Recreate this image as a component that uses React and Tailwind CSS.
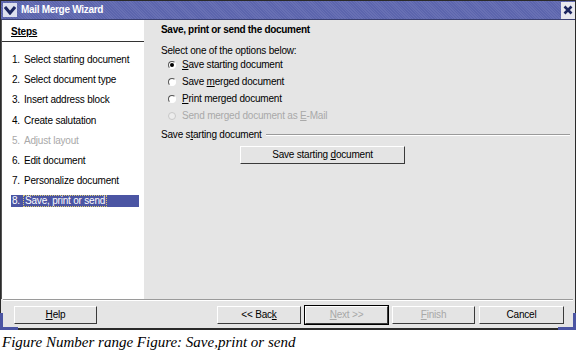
import React from "react";

const steps = [
    { n: "1.", label: "Select starting document" },
    { n: "2.", label: "Select document type" },
    { n: "3.", label: "Insert address block" },
    { n: "4.", label: "Create salutation" },
    { n: "5.", label: "Adjust layout", disabled: true },
    { n: "6.", label: "Edit document" },
    { n: "7.", label: "Personalize document" },
    { n: "8.", label: "Save, print or send", active: true },
];

const options = [
    { label: "Save starting document", key: "S", checked: true },
    { label: "Save merged document", key: "m" },
    { label: "Print merged document", key: "P" },
    { label: "Send merged document as E-Mail", key: "E", disabled: true },
];

// underline the mnemonic letter the way the toolkit does
const Mnemonic = ({ text, char }) => {
    const i = text.indexOf(char);
    if (i < 0) return <span>{text}</span>;
    return (
        <span className="whitespace-pre">
            {text.slice(0, i)}
            <span className="underline underline-offset-1">{text[i]}</span>
            {text.slice(i + 1)}
        </span>
    );
};

const Button = ({ children, className = "", disabled, isDefault }) => (
    <div
        className={`h-[18px] flex items-center justify-center bg-[#e4e4e4] border border-t-white border-l-white border-b-[#3a3a3a] border-r-[#3a3a3a] ${
            isDefault ? "outline outline-1 outline-black" : ""
        } ${disabled ? "text-[#a8a8a8]" : "text-black"} ${className}`}
    >
        {children}
    </div>
);

const Radio = ({ checked, disabled }) => (
    <div
        className={`w-[8px] h-[8px] rounded-full border flex items-center justify-center ${
            disabled
                ? "border-[#c8c8c8] bg-[#ececec]"
                : "border-t-[#555] border-l-[#555] border-b-white border-r-white bg-white"
        }`}
    >
        {checked && <div className="w-[4px] h-[4px] rounded-full bg-black" />}
    </div>
);

export default function App() {
    return (
        <div className="w-[577px] h-[353px] bg-white font-['Liberation_Sans',sans-serif] text-[10px] tracking-[-0.2px] leading-none overflow-hidden">
            <div className="relative w-[576px] h-[330px] border border-[#2a2a2a] border-b-2 flex flex-col bg-[#e5e5e5]">
                {/* title bar */}
                <div className="h-[19px] flex items-center bg-[#5c65ad] bg-[repeating-linear-gradient(45deg,#5c65ad_0px,#5c65ad_1px,#6870b4_1px,#6870b4_2px)] border-b border-[#3a3f70]">
                    <div className="w-[14px] h-[14px] ml-[2px] bg-[#dde0ee] flex items-center justify-center">
                        <svg width="12" height="9" viewBox="0 0 12 9">
                            <path d="M1 1 L6 7 L11 1" stroke="#1c2660" strokeWidth="3" fill="none" />
                        </svg>
                    </div>
                    <span className="ml-[4px] text-white font-bold text-[10px] tracking-[-0.3px]">
                        Mail Merge Wizard
                    </span>
                    <div className="ml-auto w-[14px] h-[17px] bg-[#e8e8ee] flex items-center justify-center">
                        <svg width="10" height="10" viewBox="0 0 10 10">
                            <path d="M1.5 1.5 L8.5 8.5 M8.5 1.5 L1.5 8.5" stroke="#1c2660" strokeWidth="2.6" />
                        </svg>
                    </div>
                </div>

                {/* body */}
                <div className="flex flex-1 border-l border-[#555]">
                    <div className="w-[142px] bg-white flex flex-col">
                        <div className="h-[21px] mt-[1px] border-b border-[#333] flex items-end pb-[4px] pl-[9px]">
                            <span className="font-bold text-[10px] underline underline-offset-1">Steps</span>
                        </div>
                        <div className="flex flex-col pt-[12px] gap-[8.2px]">
                            {steps.map((s) => (
                                <div
                                    key={s.n}
                                    className={`h-[12px] ml-[9px] mr-[5px] flex items-center pl-[1px] ${
                                        s.active ? "bg-[#4b55a3] text-white" : ""
                                    } ${s.disabled ? "text-[#a9a9a9]" : ""}`}
                                >
                                    <span className="w-[12px]">{s.n}</span>
                                    <span
                                        className={
                                            s.active ? "outline outline-1 outline-dotted outline-[#d8c870] px-[1px]" : ""
                                        }
                                    >
                                        {s.label}
                                    </span>
                                </div>
                            ))}
                        </div>
                    </div>

                    <div className="flex-1 bg-[#e5e5e5] pl-[17px] pr-[5px] flex flex-col">
                        <div className="mt-[5px] font-bold text-[10px] tracking-[-0.3px]">
                            Save, print or send the document
                        </div>
                        <div className="mt-[11px]">Select one of the options below:</div>
                        <div className="mt-[4px] flex flex-col gap-[7px] pl-[7px]">
                            {options.map((o) => (
                                <div
                                    key={o.label}
                                    className={`flex items-center h-[10px] gap-[6px] ${
                                        o.disabled ? "text-[#a9a9a9]" : ""
                                    }`}
                                >
                                    <Radio checked={o.checked} disabled={o.disabled} />
                                    <Mnemonic text={o.label} char={o.key} />
                                </div>
                            ))}
                        </div>
                        <div className="mt-[9px] flex items-center gap-[4px]">
                            <Mnemonic text="Save starting document" char="t" />
                            <div className="flex-1 h-[2px] border-t border-[#9a9a9a] border-b border-b-white" />
                        </div>
                        <div className="mt-[6px] pl-[79px]">
                            <Button className="w-[165px]">
                                <Mnemonic text="Save starting document" char="d" />
                            </Button>
                        </div>
                    </div>
                </div>

                {/* separator + buttons */}
                <div className="h-[2px] border-t border-[#9a9a9a] border-b border-b-white mx-[2px]" />
                <div className="h-[27px] flex items-start pt-[5px] pl-[13px] pr-[11px]">
                    <Button className="w-[83px]">
                        <Mnemonic text="Help" char="H" />
                    </Button>
                    <div className="flex-1" />
                    <div className="flex gap-[4px]">
                        <Button className="w-[84px]">
                            <Mnemonic text="<< Back" char="k" />
                        </Button>
                        <Button className="w-[83px]" disabled isDefault>
                            <Mnemonic text="Next >>" char="N" />
                        </Button>
                        <Button className="w-[83px]" disabled>
                            <Mnemonic text="Finish" char="F" />
                        </Button>
                        <Button className="w-[85px]">
                            <Mnemonic text="Cancel" char="~" />
                        </Button>
                    </div>
                </div>

                {/* resize corners */}
                <div className="absolute -left-[1px] -bottom-[2px] w-[18px] h-[17px] border-l-[3px] border-b-[3px] border-[#4b55a3]" />
                <div className="absolute -right-[1px] -bottom-[2px] w-[18px] h-[17px] border-r-[3px] border-b-[3px] border-[#4b55a3]" />
            </div>
            <div className="mt-[5px] ml-[2px] font-['Liberation_Serif',serif] italic text-[15px] leading-none tracking-normal">
                Figure Number range Figure: Save,print or send
            </div>
        </div>
    );
}
